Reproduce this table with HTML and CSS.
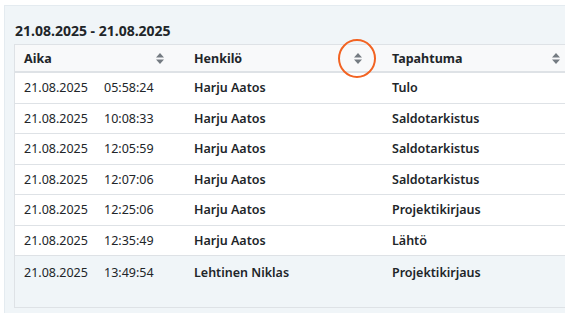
FILE: index.html
```html
<!DOCTYPE html>
<html lang="fi">
<head>
<meta charset="utf-8">
<link rel="stylesheet" href="styles.css">
</head>
<body>
<div class="panel">
  <h2 class="range">21.08.2025 - 21.08.2025</h2>
  <div class="table-wrap">
    <div class="grid head">
      <div class="cell hcell"><span>Aika</span><svg class="sort" viewBox="0 0 8 11"><path d="M4 0 L8 4.5 L0 4.5 Z M0 6.5 L8 6.5 L4 11 Z"/></svg></div>
      <div class="cell hcell"><span>Henkilö</span><svg class="sort" viewBox="0 0 8 11"><path d="M4 0 L8 4.5 L0 4.5 Z M0 6.5 L8 6.5 L4 11 Z"/></svg></div>
      <div class="cell hcell"><span>Tapahtuma</span><svg class="sort" viewBox="0 0 8 11"><path d="M4 0 L8 4.5 L0 4.5 Z M0 6.5 L8 6.5 L4 11 Z"/></svg></div>
    </div>
    <div class="grid row"><div class="cell"><span class="date">21.08.2025</span><span>05:58:24</span></div><div class="cell strong">Harju Aatos</div><div class="cell strong">Tulo</div></div>
    <div class="grid row"><div class="cell"><span class="date">21.08.2025</span><span>10:08:33</span></div><div class="cell strong">Harju Aatos</div><div class="cell strong">Saldotarkistus</div></div>
    <div class="grid row"><div class="cell"><span class="date">21.08.2025</span><span>12:05:59</span></div><div class="cell strong">Harju Aatos</div><div class="cell strong">Saldotarkistus</div></div>
    <div class="grid row"><div class="cell"><span class="date">21.08.2025</span><span>12:07:06</span></div><div class="cell strong">Harju Aatos</div><div class="cell strong">Saldotarkistus</div></div>
    <div class="grid row"><div class="cell"><span class="date">21.08.2025</span><span>12:25:06</span></div><div class="cell strong">Harju Aatos</div><div class="cell strong">Projektikirjaus</div></div>
    <div class="grid row"><div class="cell"><span class="date">21.08.2025</span><span>12:35:49</span></div><div class="cell strong">Harju Aatos</div><div class="cell strong">Lähtö</div></div>
    <div class="grid row last"><div class="cell"><span class="date">21.08.2025</span><span>13:49:54</span></div><div class="cell strong">Lehtinen Niklas</div><div class="cell strong">Projektikirjaus</div></div>
  </div>
</div>
<div class="mark"></div>
</body>
</html>
```
FILE: styles.css
```css
html, body {
  margin: 0;
  padding: 0;
  background: #ffffff;
  overflow: hidden;
}
body {
  font-family: "Noto Sans", "Open Sans", sans-serif;
  color: #212529;
  font-size: 12.5px;
  width: 565px;
  height: 313px;
  position: relative;
}
.panel {
  margin: 5px 0 0 4px;
  background: #f0f5f8;
  border-top: 1px solid #e4ebf0;
  border-left: 1px solid #e4ebf0;
  padding: 15px 0 0 9px;
  height: 308px;
  box-sizing: border-box;
  overflow: hidden;
}
.range {
  margin: 0 0 3px 1px;
  font-size: 14px;
  font-weight: 700;
  line-height: 20px;
  color: #212529;
}
.table-wrap {
  border: 1px solid #dee2e6;
  width: 600px;
  height: 264px;
  box-sizing: border-box;
}
.grid {
  display: grid;
  grid-template-columns: 170px 198px 198px;
}
.head {
  background: #f8f9fa;
  border-bottom: 2px solid #dee2e6;
  height: 26px;
  align-items: center;
  font-weight: 700;
}
.hcell {
  display: flex;
  justify-content: space-between;
  align-items: center;
  padding: 0 21px 0 9px;
}
.sort {
  width: 8px;
  height: 11px;
  fill: #747b82;
}
.row {
  background: #ffffff;
  border-bottom: 1px solid #dee2e6;
  height: 29.5px;
  align-items: center;
}
.row.last {
  background: transparent;
  border-bottom: none;
  height: 33px;
}
.cell {
  padding-left: 9px;
  white-space: nowrap;
}
.date {
  display: inline-block;
  width: 80px;
}
.strong {
  font-weight: 600;
}
.mark {
  position: absolute;
  left: 338px;
  top: 39px;
  width: 34px;
  height: 35px;
  border: 2px solid #f26322;
  border-radius: 50%;
}
```
